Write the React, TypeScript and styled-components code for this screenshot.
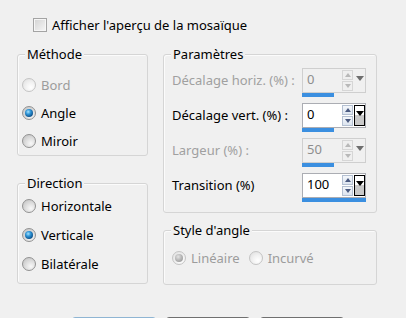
import React from 'react';
import styled, {createGlobalStyle} from 'styled-components';

const GlobalStyle = createGlobalStyle`
    html, body {
        margin: 0;
        padding: 0;
        background: #f0f0f0;
    }

    body {
        font-family: "Noto Sans", "Liberation Sans", sans-serif;
        font-size: 13px;
        color: #000;
    }
`;

const methods = [
    {label: 'Bord', checked: false, disabled: true},
    {label: 'Angle', checked: true},
    {label: 'Miroir', checked: false},
];

const directions = [
    {label: 'Horizontale', checked: false},
    {label: 'Verticale', checked: true},
    {label: 'Bilatérale', checked: false},
];

const params = [
    {label: 'Décalage horiz. (%) :', value: '0', bar: 32, disabled: true},
    {label: 'Décalage vert. (%) :', value: '0', bar: 32},
    {label: 'Largeur (%) :', value: '50', bar: 32, disabled: true},
    {label: 'Transition (%)', value: '100', bar: 64},
];

interface RadioProps {
    label: string;
    checked?: boolean;
    disabled?: boolean;
}

const Radio = ({label, checked, disabled}: RadioProps) => (
    <RadioRow $disabled={disabled}>
        <RadioCircle
            $checked={checked}
            $disabled={disabled}
        />
        <span>{label}</span>
    </RadioRow>
);

interface SpinProps {
    value: string;
    bar: number;
    disabled?: boolean;
}

const Spin = ({value, bar, disabled}: SpinProps) => (
    <SpinWrap>
        <SpinBox $disabled={disabled}>
            <SpinValue $disabled={disabled}>{value}</SpinValue>
            <Steppers>
                <Stepper $disabled={disabled}><ArrowUp $disabled={disabled}/></Stepper>
                <Stepper $disabled={disabled}><ArrowDown $disabled={disabled}/></Stepper>
            </Steppers>
            <Drop $disabled={disabled}><DropArrow $disabled={disabled}/></Drop>
        </SpinBox>
        <BarTrack>
            <Bar style={{width: bar}}/>
        </BarTrack>
    </SpinWrap>
);

const App = () => {
    return (
        <Window>
            <GlobalStyle/>
            <CheckRow>
                <CheckBox/>
                <span>{"Afficher l'aperçu de la mosaïque"}</span>
            </CheckRow>
            <Columns>
                <LeftCol>
                    <MethodGroup>
                        <Caption>{'Méthode'}</Caption>
                        {methods.map((m) => (
                            <Radio
                                key={m.label}
                                {...m}
                            />
                        ))}
                    </MethodGroup>
                    <DirectionGroup>
                        <Caption>{'Direction'}</Caption>
                        {directions.map((d) => (
                            <Radio
                                key={d.label}
                                {...d}
                            />
                        ))}
                    </DirectionGroup>
                </LeftCol>
                <RightCol>
                    <ParamGroup>
                        <Caption>{'Paramètres'}</Caption>
                        {params.map((p) => (
                            <ParamRow key={p.label}>
                                <ParamLabel $disabled={p.disabled}>{p.label}</ParamLabel>
                                <Spin
                                    value={p.value}
                                    bar={p.bar}
                                    disabled={p.disabled}
                                />
                            </ParamRow>
                        ))}
                    </ParamGroup>
                    <StyleGroup>
                        <Caption>{"Style d'angle"}</Caption>
                        <InlineRadios>
                            <Radio
                                label='Linéaire'
                                checked={true}
                                disabled={true}
                            />
                            <Radio
                                label='Incurvé'
                                disabled={true}
                            />
                        </InlineRadios>
                    </StyleGroup>
                </RightCol>
            </Columns>
            <Footer>
                <Button
                    $default={true}
                    aria-label='OK'
                />
                <Button aria-label='Annuler'/>
                <Button aria-label='Aide'/>
            </Footer>
        </Window>
    );
};

const Window = styled.div`
    width: 406px;
    height: 318px;
    overflow: hidden;
    background: #f0f0f0;
    display: flex;
    flex-direction: column;
`;

const CheckRow = styled.label`
    display: flex;
    align-items: center;
    gap: 5px;
    height: 14px;
    margin: 18px 0 0 33px;
    line-height: 14px;
`;

const CheckBox = styled.span`
    width: 14px;
    height: 14px;
    box-sizing: border-box;
    border: 1px solid #a4a4a4;
    box-shadow: inset 0 0 0 1px #f6f6f6;
    background: linear-gradient(135deg, #d2d2d2 0%, #e6e6e6 55%, #f6f6f6 100%);
    flex-shrink: 0;
`;

const Columns = styled.div`
    display: flex;
    gap: 15px;
    margin-top: 22px;
    padding-left: 17px;
`;

const LeftCol = styled.div`
    width: 131px;
    display: flex;
    flex-direction: column;
`;

const RightCol = styled.div`
    width: 214px;
    display: flex;
    flex-direction: column;
`;

const Group = styled.div`
    position: relative;
    box-sizing: border-box;
    border: 1px solid #d5d5d5;
    border-radius: 3px;
    box-shadow: inset 1px 1px 0 #fbfbfb;
    display: flex;
    flex-direction: column;
`;

const MethodGroup = styled(Group)`
    padding: 20px 0 4px 4px;
    gap: 8px;
`;

const DirectionGroup = styled(Group)`
    margin-top: 27px;
    padding: 12px 0 9px 4px;
    gap: 9px;
`;

const ParamGroup = styled(Group)`
    padding: 13px 0 10px 8px;
    gap: 6px;
`;

const StyleGroup = styled(Group)`
    margin-top: 17px;
    padding: 17px 0 16px 8px;
`;

const Caption = styled.span`
    position: absolute;
    top: -9px;
    left: 7px;
    padding: 0 2px;
    background: #f0f0f0;
    line-height: 16px;
`;

const RadioRow = styled.label<{$disabled?: boolean}>`
    display: flex;
    align-items: center;
    gap: 5px;
    height: 20px;
    color: ${(p) => (p.$disabled ? '#9c9c9c' : '#000')};
`;

const RadioCircle = styled.span<{$checked?: boolean; $disabled?: boolean}>`
    width: 14px;
    height: 14px;
    box-sizing: border-box;
    border-radius: 50%;
    border: 1px solid ${(p) => (p.$disabled ? '#c4c4c4' : '#929292')};
    background: ${(p) => (p.$disabled ?
        'radial-gradient(circle at 65% 70%, #ffffff 0%, #f1f1f1 45%, #dcdcdc 100%)' :
        'radial-gradient(circle at 65% 70%, #f8f8f8 0%, #dedede 45%, #bdbdbd 100%)')};
    display: flex;
    align-items: center;
    justify-content: center;
    flex-shrink: 0;

    &::after {
        content: '';
        display: ${(p) => (p.$checked ? 'block' : 'none')};
        width: 8px;
        height: 8px;
        border-radius: 50%;
        background: ${(p) => (p.$disabled ?
        'radial-gradient(circle at 40% 35%, #e4e4e4 0%, #b4b4b4 50%, #8e8e8e 100%)' :
        'radial-gradient(circle at 40% 35%, #a6e4ff 0%, #2e94d6 35%, #0c4f88 75%, #06294a 100%)')};
    }
`;

const InlineRadios = styled.div`
    display: flex;
    gap: 9px;
`;

const ParamRow = styled.div`
    display: grid;
    grid-template-columns: 130px 64px;
    height: 29px;
`;

const ParamLabel = styled.span<{$disabled?: boolean}>`
    line-height: 25px;
    color: ${(p) => (p.$disabled ? '#a0a0a0' : '#000')};
    white-space: nowrap;
`;

const SpinWrap = styled.div`
    display: flex;
    flex-direction: column;
    width: 64px;
`;

const SpinBox = styled.div<{$disabled?: boolean}>`
    display: flex;
    align-items: flex-start;
    height: 25px;
    box-sizing: border-box;
    border: 1px solid ${(p) => (p.$disabled ? '#cfcfcf' : '#abadb3')};
    background: ${(p) => (p.$disabled ? '#f0f0f0' : '#ffffff')};
`;

const SpinValue = styled.span<{$disabled?: boolean}>`
    flex: 1;
    padding-left: 4px;
    line-height: 20px;
    color: ${(p) => (p.$disabled ? '#8e8e8e' : '#000')};
`;

const Steppers = styled.div`
    display: flex;
    flex-direction: column;
    gap: 1px;
    width: 11px;
    margin: 1px 1px 0 0;
`;

const Stepper = styled.div<{$disabled?: boolean}>`
    height: 10px;
    box-sizing: border-box;
    border: 1px solid ${(p) => (p.$disabled ? '#d6d6d6' : '#b4c0d2')};
    background: ${(p) => (p.$disabled ? '#efefef' : 'linear-gradient(#f4f7fb, #dde5f0)')};
    display: flex;
    align-items: center;
    justify-content: center;
`;

const ArrowUp = styled.span<{$disabled?: boolean}>`
    width: 0;
    height: 0;
    border-left: 3px solid transparent;
    border-right: 3px solid transparent;
    border-bottom: 4px solid ${(p) => (p.$disabled ? '#b8b8b8' : '#4a5a80')};
`;

const ArrowDown = styled.span<{$disabled?: boolean}>`
    width: 0;
    height: 0;
    border-left: 3px solid transparent;
    border-right: 3px solid transparent;
    border-top: 4px solid ${(p) => (p.$disabled ? '#b8b8b8' : '#4a5a80')};
`;

const Drop = styled.div<{$disabled?: boolean}>`
    width: 11px;
    height: 21px;
    box-sizing: border-box;
    margin-top: 1px;
    border: 1px solid ${(p) => (p.$disabled ? 'transparent' : '#000')};
    background: ${(p) => (p.$disabled ? 'transparent' : 'linear-gradient(transparent 45%, #c9c9c9 45%)')};
    display: flex;
    justify-content: center;
    padding-top: 5px;
`;

const DropArrow = styled.span<{$disabled?: boolean}>`
    width: 0;
    height: 0;
    border-left: 4px solid transparent;
    border-right: 4px solid transparent;
    border-top: 5px solid ${(p) => (p.$disabled ? '#6e6e6e' : '#000')};
`;

const BarTrack = styled.div`
    height: 4px;
    width: 64px;
`;

const Bar = styled.div`
    height: 4px;
    background: #3b8fe0;
`;

const Footer = styled.div`
    display: flex;
    gap: 10px;
    margin-top: 32px;
    padding-left: 72px;
`;

const Button = styled.button<{$default?: boolean}>`
    width: 84px;
    height: 23px;
    flex-shrink: 0;
    border: 1px solid ${(p) => (p.$default ? '#8fb5d3' : '#707070')};
    border-radius: 3px;
    background: linear-gradient(#f2f2f2 0%, #ebebeb 50%, #dddddd 51%, #cfcfcf 100%);
    padding: 0;
`;

export default App;
